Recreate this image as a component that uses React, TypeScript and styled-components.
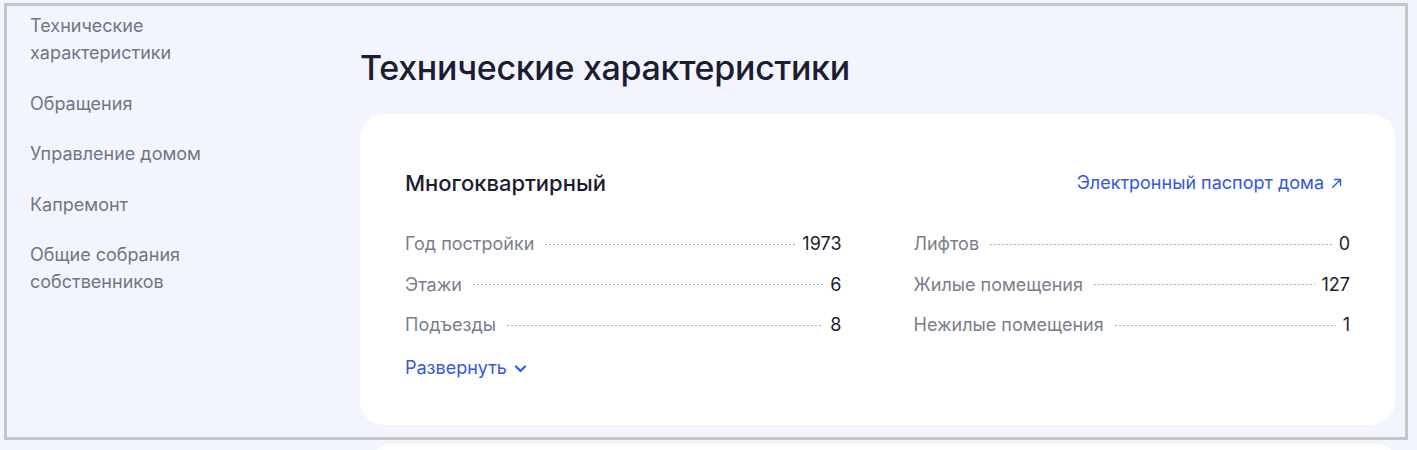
import React from "react";
import styled, { createGlobalStyle } from "styled-components";

const Global = createGlobalStyle`
  html, body {
    margin: 0;
    padding: 0;
    background: #f2f5fe;
    font-family: Inter, "Noto Sans", Arial, sans-serif;
    -webkit-font-smoothing: antialiased;
  }
  body {
    padding: 3px 0 0 4px;
    height: 450px;
    overflow: hidden;
    box-sizing: border-box;
  }
`;

const Frame = styled.div`
  width: 1404px;
  height: 437px;
  box-sizing: border-box;
  border: 3px solid #c5c5c5;
  display: grid;
  grid-template-columns: 353px 1fr;
  overflow: hidden;
`;

const Nav = styled.nav`
  display: flex;
  flex-direction: column;
  gap: 23.5px;
  padding: 6px 0 0 23px;
`;

const NavItem = styled.a`
  font-size: 18px;
  line-height: 27px;
  color: #717684;
  text-decoration: none;
  max-width: 190px;
`;

const Main = styled.main`
  padding: 42px 10px 0 0;
  display: flex;
  flex-direction: column;
`;

const Title = styled.h1`
  margin: 0 0 26px;
  font-size: 34px;
  line-height: 40px;
  font-weight: 500;
  letter-spacing: -0.3px;
  color: #1c1c32;
`;

const Card = styled.section`
  background: #ffffff;
  border-radius: 24px;
  padding: 55px 45px 45px 45px;
  display: flex;
  flex-direction: column;
`;

const CardHeader = styled.div`
  display: flex;
  align-items: center;
  justify-content: space-between;
  margin-bottom: 35px;
`;

const CardTitle = styled.h2`
  margin: 0;
  font-size: 22px;
  line-height: 28px;
  font-weight: 500;
  color: #1c1c32;
`;

const Link = styled.a`
  display: inline-flex;
  align-items: center;
  gap: 7px;
  font-size: 18px;
  line-height: 24px;
  color: #3558df;
  text-decoration: none;
  margin-right: 8px;
`;

const Grid = styled.div`
  display: grid;
  grid-template-columns: 1fr 1fr;
  column-gap: 72px;
  row-gap: 16.5px;
`;

const Row = styled.div`
  display: flex;
  align-items: center;
  font-size: 18px;
  line-height: 24px;
`;

const Label = styled.span`
  color: #7a7e8c;
  white-space: nowrap;
`;

const Dots = styled.span`
  flex: 1;
  height: 1px;
  margin: 0 7px 0 11px;
  background-image: linear-gradient(to right, #aeb1c2 60%, transparent 0%);
  background-size: 4px 1px;
  background-repeat: repeat-x;
`;

const Value = styled.span`
  color: #1c1c32;
`;

const Expand = styled.button`
  margin-top: 19px;
  align-self: flex-start;
  display: inline-flex;
  align-items: center;
  gap: 7px;
  background: none;
  border: none;
  padding: 0;
  font-family: inherit;
  font-size: 18px;
  line-height: 24px;
  color: #3558df;
  cursor: pointer;
`;

const NextCard = styled.div`
  margin: 4px 20px 0 367px;
  height: 20px;
  background: #ffffff;
  border-radius: 24px 24px 0 0;
`;

const rows: [string, string][] = [
  ["Год постройки", "1973"],
  ["Лифтов", "0"],
  ["Этажи", "6"],
  ["Жилые помещения", "127"],
  ["Подъезды", "8"],
  ["Нежилые помещения", "1"],
];

export default function App() {
  return (
    <>
      <Global />
      <Frame>
        <Nav>
          <NavItem>Технические характеристики</NavItem>
          <NavItem>Обращения</NavItem>
          <NavItem>Управление домом</NavItem>
          <NavItem>Капремонт</NavItem>
          <NavItem>Общие собрания собственников</NavItem>
        </Nav>
        <Main>
          <Title>Технические характеристики</Title>
          <Card>
            <CardHeader>
              <CardTitle>Многоквартирный</CardTitle>
              <Link href="#">
                Электронный паспорт дома
                <svg width="11" height="11" viewBox="0 0 11 11" fill="none">
                  <path d="M1.5 9.5L9.5 1.5M3.5 1.5h6v6" stroke="#3558df" strokeWidth="1.4" strokeLinecap="round" strokeLinejoin="round" />
                </svg>
              </Link>
            </CardHeader>
            <Grid>
              {rows.map(([l, v]) => (
                <Row key={l}>
                  <Label>{l}</Label>
                  <Dots />
                  <Value>{v}</Value>
                </Row>
              ))}
            </Grid>
            <Expand>
              Развернуть
              <svg width="13" height="9" viewBox="0 0 13 9" fill="none">
                <path d="M2 2.5l4.5 4.5 4.5-4.5" stroke="#3558df" strokeWidth="2.2" strokeLinecap="round" strokeLinejoin="round" />
              </svg>
            </Expand>
          </Card>
        </Main>
      </Frame>
      <NextCard />
    </>
  );
}
